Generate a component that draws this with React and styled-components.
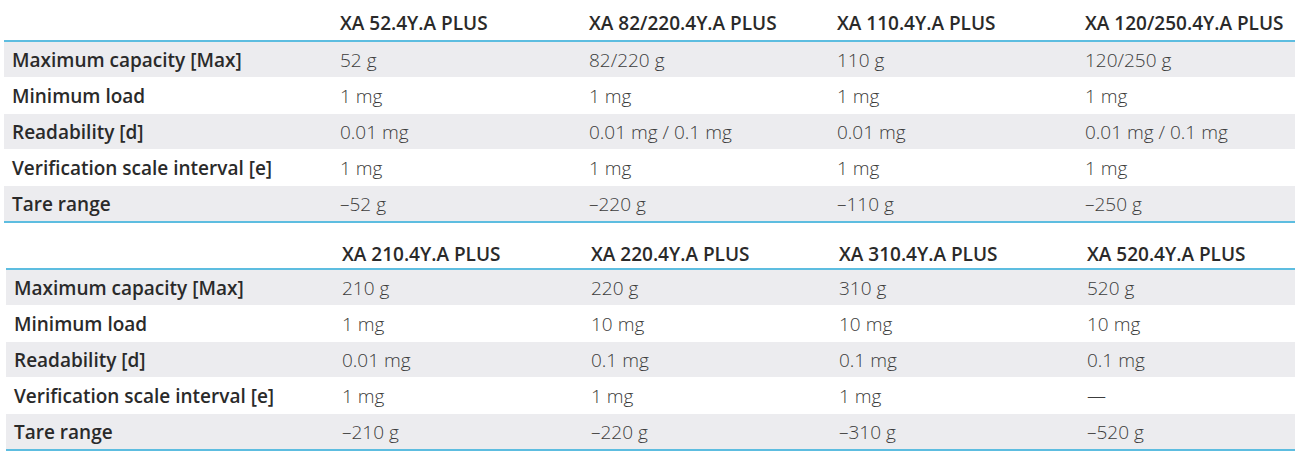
import React from "react";
import styled, { createGlobalStyle } from "styled-components";

const GlobalStyle = createGlobalStyle`
  *, *::before, *::after {
    box-sizing: border-box;
  }
  body {
    margin: 0;
    background: #ffffff;
    font-family: "Open Sans", "Liberation Sans", sans-serif;
  }
`;

const Page = styled.div`
  width: 1295px;
`;

const Table = styled.div`
  display: grid;
  grid-template-columns: 328px 249px 248px 248px 1fr;
  margin-left: ${({ $offset }) => $offset}px;
  border-bottom: 2px solid #5dbde0;
`;

const HeadCell = styled.div`
  height: ${({ $height }) => $height}px;
  display: flex;
  align-items: flex-end;
  padding: 0 0 ${({ $pad }) => $pad}px 8px;
  font-size: 19px;
  font-weight: 600;
  color: #2a2a2a;
  white-space: nowrap;
  border-bottom: 2px solid #5dbde0;
`;

const Cell = styled.div`
  height: ${({ $shaded }) => ($shaded ? 35 : 37)}px;
  display: flex;
  align-items: center;
  padding-left: 8px;
  font-size: 19px;
  white-space: nowrap;
  background: ${({ $shaded }) => ($shaded ? "#ececef" : "#ffffff")};
  font-weight: ${({ $label }) => ($label ? 600 : 300)};
  color: ${({ $label }) => ($label ? "#2a2a2a" : "#3c3c3c")};
`;

const labels = [
  "Maximum capacity [Max]",
  "Minimum load",
  "Readability [d]",
  "Verification scale interval [e]",
  "Tare range",
];

const tables = [
  {
    offset: 4,
    headHeight: 42,
    headPad: 4,
    models: [
      "XA 52.4Y.A PLUS",
      "XA 82/220.4Y.A PLUS",
      "XA 110.4Y.A PLUS",
      "XA 120/250.4Y.A PLUS",
    ],
    rows: [
      ["52 g", "82/220 g", "110 g", "120/250 g"],
      ["1 mg", "1 mg", "1 mg", "1 mg"],
      ["0.01 mg", "0.01 mg / 0.1 mg", "0.01 mg", "0.01 mg / 0.1 mg"],
      ["1 mg", "1 mg", "1 mg", "1 mg"],
      ["\u201352 g", "\u2013220 g", "\u2013110 g", "\u2013250 g"],
    ],
  },
  {
    offset: 6,
    headHeight: 47,
    headPad: 1,
    models: [
      "XA 210.4Y.A PLUS",
      "XA 220.4Y.A PLUS",
      "XA 310.4Y.A PLUS",
      "XA 520.4Y.A PLUS",
    ],
    rows: [
      ["210 g", "220 g", "310 g", "520 g"],
      ["1 mg", "10 mg", "10 mg", "10 mg"],
      ["0.01 mg", "0.1 mg", "0.1 mg", "0.1 mg"],
      ["1 mg", "1 mg", "1 mg", "\u2014"],
      ["\u2013210 g", "\u2013220 g", "\u2013310 g", "\u2013520 g"],
    ],
  },
];

const SpecTable = ({ offset, headHeight, headPad, models, rows }) => (
  <Table $offset={offset}>
    <HeadCell $height={headHeight} $pad={headPad} />
    {models.map((m) => (
      <HeadCell key={m} $height={headHeight} $pad={headPad}>
        {m}
      </HeadCell>
    ))}
    {rows.map((row, i) => (
      <React.Fragment key={i}>
        <Cell $label $shaded={i % 2 === 0}>
          {labels[i]}
        </Cell>
        {row.map((v, j) => (
          <Cell key={j} $shaded={i % 2 === 0}>
            {v}
          </Cell>
        ))}
      </React.Fragment>
    ))}
  </Table>
);

export default function App() {
  return (
    <Page>
      <GlobalStyle />
      {tables.map((t, i) => (
        <SpecTable key={i} {...t} />
      ))}
    </Page>
  );
}
